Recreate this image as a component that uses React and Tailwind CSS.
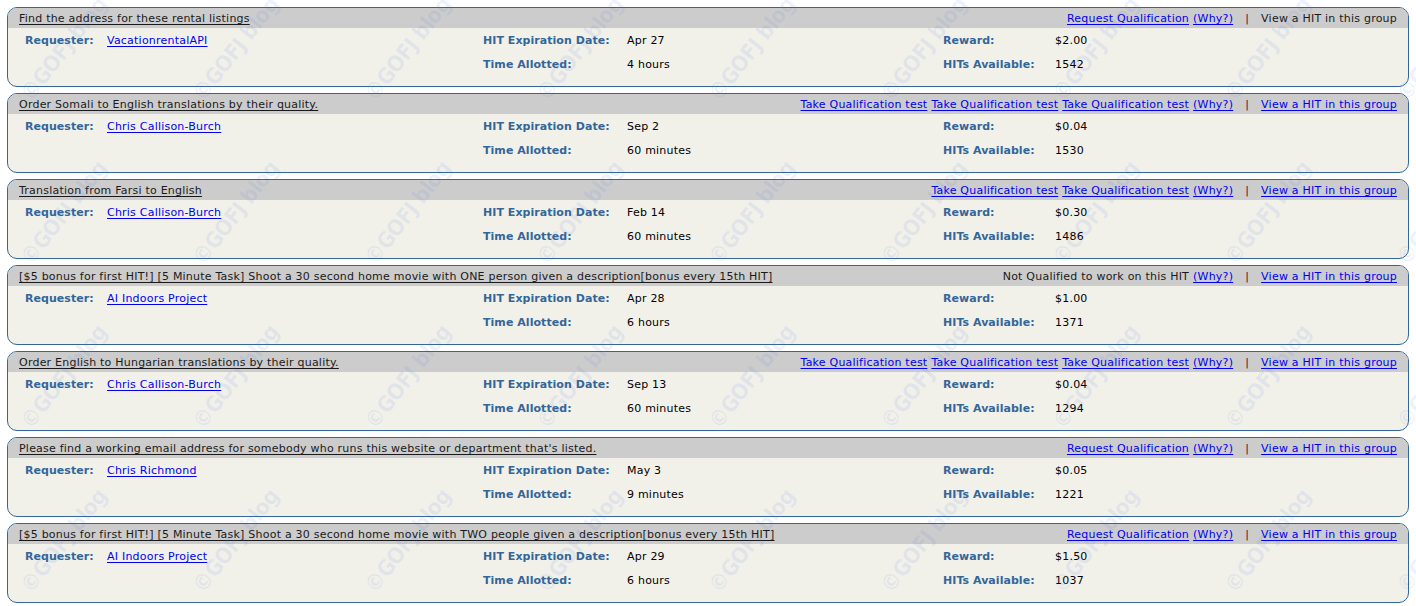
import React from "react";

const hits = [
  {
    title: "Find the address for these rental listings",
    quals: [{ t: "Request Qualification", link: true }],
    viewLink: false,
    requester: "VacationrentalAPI",
    exp: "Apr 27",
    time: "4 hours",
    reward: "$2.00",
    avail: "1542",
  },
  {
    title: "Order Somali to English translations by their quality.",
    quals: [
      { t: "Take Qualification test", link: true },
      { t: "Take Qualification test", link: true },
      { t: "Take Qualification test", link: true },
    ],
    viewLink: true,
    requester: "Chris Callison-Burch",
    exp: "Sep 2",
    time: "60 minutes",
    reward: "$0.04",
    avail: "1530",
  },
  {
    title: "Translation from Farsi to English",
    quals: [
      { t: "Take Qualification test", link: true },
      { t: "Take Qualification test", link: true },
    ],
    viewLink: true,
    requester: "Chris Callison-Burch",
    exp: "Feb 14",
    time: "60 minutes",
    reward: "$0.30",
    avail: "1486",
  },
  {
    title:
      "[$5 bonus for first HIT!] [5 Minute Task] Shoot a 30 second home movie with ONE person given a description[bonus every 15th HIT]",
    quals: [{ t: "Not Qualified to work on this HIT", link: false }],
    viewLink: true,
    requester: "AI Indoors Project",
    exp: "Apr 28",
    time: "6 hours",
    reward: "$1.00",
    avail: "1371",
  },
  {
    title: "Order English to Hungarian translations by their quality.",
    quals: [
      { t: "Take Qualification test", link: true },
      { t: "Take Qualification test", link: true },
      { t: "Take Qualification test", link: true },
    ],
    viewLink: true,
    requester: "Chris Callison-Burch",
    exp: "Sep 13",
    time: "60 minutes",
    reward: "$0.04",
    avail: "1294",
  },
  {
    title:
      "Please find a working email address for somebody who runs this website or department that's listed.",
    quals: [{ t: "Request Qualification", link: true }],
    viewLink: true,
    requester: "Chris Richmond",
    exp: "May 3",
    time: "9 minutes",
    reward: "$0.05",
    avail: "1221",
  },
  {
    title:
      "[$5 bonus for first HIT!] [5 Minute Task] Shoot a 30 second home movie with TWO people given a description[bonus every 15th HIT]",
    quals: [{ t: "Request Qualification", link: true }],
    viewLink: true,
    requester: "AI Indoors Project",
    exp: "Apr 29",
    time: "6 hours",
    reward: "$1.50",
    avail: "1037",
  },
];

const linkCls = "text-[#0000ee] underline underline-offset-[2px]";
const labelCls = "font-bold text-[#336699] tracking-[0.05px]";

function Card({ h }) {
  return (
    <div className="mx-[7px] mb-[6px] h-[80px] rounded-[10px] border border-[#336699] bg-[#f1f1ea] overflow-hidden">
      <div className="h-[20px] pt-[2px] bg-[#cccccc] flex items-center justify-between pl-[11px] pr-[11px] whitespace-nowrap">
        <span className="text-[#1a1a1a] underline underline-offset-[2px]">{h.title}</span>
        <span className="flex items-center">
          {h.quals.map((q, i) =>
            q.link ? (
              <span key={i} className={linkCls + " mr-[4px]"}>
                {q.t}
              </span>
            ) : (
              <span key={i} className="text-[#1a1a1a] mr-[4px]">
                {q.t}
              </span>
            )
          )}
          <span className={linkCls}>(Why?)</span>
          <span className="text-[#660033] mx-[12px]">|</span>
          {h.viewLink ? (
            <span className={linkCls}>View a HIT in this group</span>
          ) : (
            <span className="text-[#1a1a1a]">View a HIT in this group</span>
          )}
        </span>
      </div>
      <div className="pt-[5px] pl-[17px] grid grid-cols-[82px_376px_144px_316px_112px_1fr] grid-rows-[16px_16px] gap-y-[8px] items-center whitespace-nowrap">
        <span className={labelCls}>Requester:</span>
        <span>
          <span className={linkCls}>{h.requester}</span>
        </span>
        <span className={labelCls}>HIT Expiration Date:</span>
        <span className="text-black">{h.exp}</span>
        <span className={labelCls}>Reward:</span>
        <span className="text-black">{h.reward}</span>
        <span></span>
        <span></span>
        <span className={labelCls}>Time Allotted:</span>
        <span className="text-black">{h.time}</span>
        <span className={labelCls}>HITs Available:</span>
        <span className="text-black">{h.avail}</span>
      </div>
    </div>
  );
}

function Watermark() {
  const items = [];
  for (let r = 0; r < 5; r++) {
    for (let c = 0; c < 9; c++) {
      items.push(
        <span
          key={r + "-" + c}
          className="absolute text-[22px] leading-[26px] font-bold tracking-[-0.5px] text-[rgba(60,110,230,0.09)] whitespace-nowrap rotate-[-52deg] origin-bottom-left"
          style={{ left: 36 + c * 172, top: 80 + r * 164, fontFamily: "'DejaVu Sans Condensed', 'DejaVu Sans', sans-serif" }}
        >
          ©GOFJ blog
        </span>
      );
    }
  }
  return <div className="pointer-events-none absolute inset-0 overflow-hidden">{items}</div>;
}

export default function App() {
  return (
    <div
      className="relative w-[1416px] h-[606px] bg-white pt-[7px] overflow-hidden text-[11px] leading-[14px] tracking-[0.22px]"
      style={{ fontFamily: "'DejaVu Sans', Verdana, sans-serif" }}
    >
      {hits.map((h, i) => (
        <Card key={i} h={h} />
      ))}
      <Watermark />
    </div>
  );
}
